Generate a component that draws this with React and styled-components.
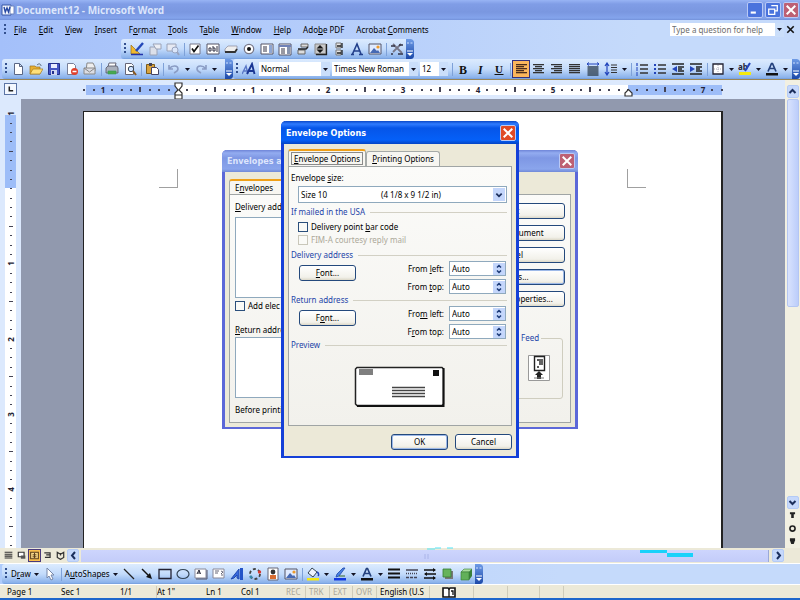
import React from 'react';
import styled, { createGlobalStyle, css } from 'styled-components';

const GlobalStyle = createGlobalStyle`
  * { box-sizing: border-box; }
  body { margin: 0; background: #1e66cc; }
  body, button, input, select, textarea {
    font-family: "Noto Sans", "Open Sans", sans-serif;
    font-size: 8px;
    line-height: 12px;
    color: #000;
  }
  button, input, select, textarea { margin: 0; padding: 0; border-radius: 0; }
  u { text-underline-offset: 1px; }
`;

const Window = styled.div`
  position: relative;
  display: flex;
  flex-direction: column;
  min-height: 100vh;
  overflow: hidden;
  border-bottom: 2px solid #1e66cc;
`;

/* ---------- title bar ---------- */

const TitleBar = styled.header`
  display: flex;
  align-items: center;
  height: 20px;
  padding: 0 1px 0 1px;
  background: linear-gradient(#98b4f4 0, #809de6 4px, #7a97e0 12px, #84a4ec 18px, #7391da 20px);
`;

const AppTitle = styled.h1`
  flex: 1;
  margin: 0 0 0 1px;
  font: bold 10px/20px "Noto Sans", sans-serif;
  color: #dce6fc;
`;

const WindowButton = styled.button`
  display: grid;
  place-items: center;
  width: 16px;
  height: 16px;
  margin-left: 2px;
  border: 1px solid #b9c9f6;
  border-radius: 2px;
  background: ${(p) => (p.$close ? (p.$active ? '#e04a26' : '#bd6074') : '#4a73dd')};
  svg { width: 12px; height: 12px; }
`;

/* ---------- menus and toolbars ---------- */

const Bars = styled.div`
  background: linear-gradient(90deg, #a4c0fa, #c5dafb 80%);
  border-bottom: 1px solid #9a8656;
`;

const MenuBar = styled.nav`
  display: flex;
  align-items: center;
  height: 19px;
  padding: 0 3px;
`;

const MenuItem = styled.button`
  margin: 0 6px;
  border: 0;
  background: none;
  white-space: nowrap;
`;

const HelpBox = styled.div`
  display: flex;
  align-items: center;
  height: 13px;
  margin-left: auto;
  background: #fff;
  input {
    width: 105px;
    height: 13px;
    padding-left: 2px;
    border: 0;
    background: #fff;
    &::placeholder { color: #6c6c6c; opacity: 1; }
  }
`;

const BarRow = styled.div`
  display: flex;
  padding-left: ${(p) => p.$inset || 2}px;
`;

const Toolbar = styled.div`
  display: flex;
  flex: ${(p) => (p.$grow ? 1 : 'none')};
  align-items: center;
  height: 20px;
  padding-left: 2px;
  overflow: hidden;
  border-radius: 3px;
  background: linear-gradient(#dcebfe, #c3dbfb 50%, #88b0ea 95%, #6d97d8);
`;

const Grip = styled.span`
  width: 2px;
  height: 12px;
  margin: 0 2px 0 1px;
  background: repeating-linear-gradient(#33508e 0 2px, transparent 2px 4px);
`;

const Separator = styled.span`
  width: 1px;
  height: 13px;
  margin: 0 1px 0 2px;
  background: #7ea1d8;
`;

const Spacer = styled.span`
  flex: ${(p) => (p.$width ? 'none' : 1)};
  width: ${(p) => p.$width || 0}px;
`;

const Cap = styled.button`
  display: grid;
  align-content: space-around;
  justify-items: center;
  flex: none;
  width: 8px;
  height: 20px;
  border: 0;
  border-radius: 0 3px 3px 0;
  background: linear-gradient(#6e9be6, #1b48a8);
  svg { width: 6px; height: 14px; }
`;

const ToolButton = styled.button`
  display: grid;
  place-items: center;
  flex: none;
  width: 18px;
  height: 18px;
  border: 1px solid transparent;
  background: none;
  ${(p) => p.$on && css`
    border-color: #33307c;
    background: #fbb65c;
  `}
  svg { width: 14px; height: 14px; }
`;

const DropButton = styled.button`
  display: grid;
  place-items: center;
  flex: none;
  width: 9px;
  height: 14px;
  border: 0;
  background: ${(p) => (p.$box ? '#cadefa' : 'none')};
  svg { width: 5px; height: 3px; }
`;

const WordButton = styled.button`
  display: flex;
  align-items: center;
  gap: 3px;
  flex: none;
  padding: 0 2px;
  border: 0;
  background: none;
  svg { width: 5px; height: 3px; }
`;

const Combo = styled.label`
  display: flex;
  align-items: center;
  flex: none;
  width: ${(p) => p.$width}px;
  height: 14px;
  margin: 0 1px;
  background: linear-gradient(90deg, #fff calc(100% - 9px), #cadefa 0);
  select {
    flex: 1;
    min-width: 0;
    height: 14px;
    padding-left: 2px;
    border: 0;
    appearance: none;
    background: none;
  }
  svg { width: 5px; height: 3px; margin-right: 2px; }
`;

/* ---------- workspace ---------- */

const Workspace = styled.main`
  display: grid;
  flex: 1;
  grid-template-columns: 21px minmax(0, 1fr) 15px;
  grid-template-rows: 19px minmax(0, 1fr);
  min-height: 0;
  background: #dce9fd;
`;

const Corner = styled.button`
  display: grid;
  place-items: center;
  width: 13px;
  height: 12px;
  margin: 3px 0 0 4px;
  border: 1px solid #5b74a5;
  background: #f4f8ff;
  svg { width: 6px; height: 6px; }
`;

const TopRuler = styled.div`
  display: flex;
  justify-content: center;
  align-items: center;
  overflow: hidden;
`;

const TopScale = styled.div`
  position: relative;
  display: flex;
  flex: none;
  width: 647px;
  height: 10px;
  background: linear-gradient(90deg, transparent 6px, #9dbdf8 6px 98px, #fff 98px 548px, #9dbdf8 548px 642px, transparent 642px);
`;

const SideRuler = styled.div`
  display: flex;
  flex-direction: column;
  height: 0;
  min-height: 100%;
  padding: 10px 5px 0 5px;
  overflow: hidden;
`;

const SideScale = styled.div`
  display: flex;
  flex: none;
  flex-direction: column;
  height: 441px;
  background: linear-gradient(#dce9fd 6px, #9dbdf8 6px 79px, #fff 79px);
`;

const Mark = styled.span`
  display: grid;
  place-items: center;
  flex: 1 1 0;
  min-width: 0;
  min-height: 0;
  font: bold 8px/9px "Noto Sans", sans-serif;
  color: #223;
  &::before {
    content: '';
    display: ${(p) => (p.$kind === 'number' ? 'none' : 'block')};
    width: ${(p) => (p.$kind === 'half' && p.$side ? 4 : 2)}px;
    height: ${(p) => (p.$kind === 'half' && !p.$side ? 5 : p.$side ? 1 : 2)}px;
    background: #445;
  }
  span { transform: ${(p) => (p.$side ? 'rotate(-90deg)' : 'none')}; }
`;

const IndentMarker = styled.svg`
  position: absolute;
  left: ${(p) => p.$at}px;
  top: -3px;
  width: 9px;
  height: 18px;
`;

const Desk = styled.div`
  display: flex;
  justify-content: center;
  overflow: hidden;
  padding-top: 12px;
  background: #9199ae;
`;

const Page = styled.article`
  display: flex;
  justify-content: space-between;
  flex: none;
  width: 640px;
  padding: 57px 75px;
  border: solid #222;
  border-width: 1px 2px 0 1px;
  background: #fff;
`;

const CropMark = styled.span`
  width: 19px;
  height: 19px;
  border: solid #a0a0a0;
  border-width: ${(p) => (p.$right ? '0 0 1px 1px' : '0 1px 1px 0')};
`;

const ScrollColumn = styled.div`
  display: flex;
  flex-direction: column;
  grid-row: 1 / 3;
  grid-column: 3;
  align-items: center;
  padding: 5px 0 0;
  background: #f2f0e2;
`;

const ScrollThumb = styled.div`
  width: 12px;
  height: 208px;
  margin-top: 1px;
  border: 1px solid #b4c6f2;
  border-radius: 2px;
  background: linear-gradient(90deg, #d8e2fd, #bccdfa);
`;

const ScrollButton = styled.button`
  display: grid;
  place-items: center;
  flex: none;
  width: 12px;
  height: 13px;
  border: ${(p) => (p.$flat ? 0 : '1px solid #b4cbf6')};
  border-radius: 2px;
  background: ${(p) => (p.$flat ? 'none' : '#c6d8fb')};
  svg { width: 9px; height: 9px; }
`;

const ScrollRow = styled.div`
  display: flex;
  align-items: center;
  height: 15px;
  padding: 0 16px 0 2px;
  background: #ece9d8;
`;

const ViewButton = styled.button`
  display: grid;
  place-items: center;
  width: 13px;
  height: 13px;
  border: ${(p) => (p.$on ? '1px solid #4a3a7c' : 0)};
  background: ${(p) => (p.$on ? '#fbbf4e' : 'none')};
  svg { width: 9px; height: 9px; }
`;

const ScrollTrack = styled.div`
  display: flex;
  justify-content: flex-end;
  flex: 1;
  height: 12px;
  margin: 0 3px 0 2px;
  border-right: 1px solid #9aa9d8;
  background: linear-gradient(#cdd5fd, #c3ccf9);
  svg { width: 346px; height: 12px; overflow: visible; }
`;

const StatusBar = styled.footer`
  display: flex;
  align-items: center;
  height: 14px;
  border-top: 1px solid #fff;
  background: #ece9d8;
`;

const StatusCell = styled.span`
  display: flex;
  align-items: center;
  flex: none;
  width: ${(p) => p.$width}px;
  height: 12px;
  padding-left: ${(p) => (p.$box ? 3 : 0)}px;
  overflow: hidden;
  white-space: nowrap;
  border-right: ${(p) => (p.$box ? '1px solid #cfccba' : 0)};
  color: ${(p) => (p.$dim ? '#aaa798' : '#000')};
`;

/* ---------- dialogs ---------- */

const DialogFrame = styled.section`
  position: absolute;
  top: ${(p) => p.$top}px;
  left: 50%;
  display: flex;
  flex-direction: column;
  width: ${(p) => p.$width}px;
  margin-left: ${(p) => -p.$width / 2}px;
  border: solid ${(p) => (p.$active ? '#1440d8' : '#5c68d8')};
  border-width: 0 3px 2px;
  border-radius: 5px 5px 0 0;
  background: #ece9d8;
`;

const DialogTitle = styled.header`
  display: flex;
  align-items: center;
  justify-content: space-between;
  height: ${(p) => (p.$active ? 23 : 22)}px;
  margin: 0 -3px;
  padding: 0 3px 0 5px;
  border-radius: 5px 5px 0 0;
  background: ${(p) => (p.$active
    ? 'linear-gradient(#0a48c8, #2f7bff 3px, #0655e8 7px, #0560f8 19px, #0444c4)'
    : 'linear-gradient(#6f85d8, #93acf0 3px, #7e97e4 8px, #8aa5ec 19px, #7189d8)')};
  h2 {
    margin: 0;
    font: bold 9px/20px "DejaVu Sans Condensed", "DejaVu Sans", sans-serif;
    color: ${(p) => (p.$active ? '#fff' : '#dde5fc')};
    white-space: nowrap;
  }
`;

const Tabs = styled.div`
  display: flex;
  align-items: flex-end;
  height: ${(p) => p.$height}px;
  margin: ${(p) => p.$top}px 4px 0;
`;

const Tab = styled.button`
  height: ${(p) => (p.$on ? '100%' : '15px')};
  padding: ${(p) => (p.$on ? '0 2px' : '0 5px')};
  border: 1px solid #a5aaa8;
  border-top: ${(p) => (p.$on ? '2px solid #f0a018' : '1px solid #a5aaa8')};
  border-bottom: 0;
  border-radius: 3px 3px 0 0;
  background: #f7f6f1;
  white-space: nowrap;
  text-align: left;
  span {
    display: block;
    padding: ${(p) => (p.$focus ? '0 2px' : '0 16px 0 2px')};
    border: 1px solid ${(p) => (p.$focus ? '#8a8a8a' : 'transparent')};
    line-height: 11px;
  }
`;

const Panel = styled.div`
  display: flex;
  flex-direction: ${(p) => (p.$row ? 'row' : 'column')};
  justify-content: space-between;
  margin: 0 4px;
  padding: ${(p) => p.$pad};
  border: 1px solid #a0a5a5;
  background: linear-gradient(#fbfbf9, #f2f1ec);
`;

const Column = styled.div`
  display: flex;
  flex-direction: column;
  width: ${(p) => p.$width}px;
`;

const FieldLabel = styled.label`
  height: 12px;
  margin-top: ${(p) => p.$top || 0}px;
  white-space: nowrap;
`;

const AddressBox = styled.textarea`
  height: ${(p) => p.$height}px;
  margin-top: ${(p) => p.$top}px;
  border: 1px solid #8fa9bd;
  background: #fff;
  resize: none;
`;

const CheckRow = styled.label`
  display: flex;
  align-items: center;
  gap: 3px;
  height: 12px;
  margin-top: ${(p) => p.$top}px;
  margin-left: ${(p) => p.$left || 0}px;
  white-space: nowrap;
  color: ${(p) => (p.$dim ? '#aca899' : '#000')};
  input {
    width: 10px;
    height: 10px;
    appearance: none;
    border: 1px solid ${(p) => (p.$dim ? '#c9c7ba' : '#2b4f7c')};
    background: #fafaf7;
  }
`;

const PushButton = styled.button`
  width: ${(p) => p.$width}px;
  height: 16px;
  border: 1px solid #24497c;
  border-radius: 3px;
  background: linear-gradient(#fff, #f2f1ea 80%, #dcd8c8);
  box-shadow: ${(p) => (p.$default ? 'inset 0 0 0 1px #9db9e8' : 'none')};
  white-space: nowrap;
`;

const ButtonStack = styled(Column)`
  gap: 6px;
  margin-top: 2px;
`;

const FeedGroup = styled.fieldset`
  display: flex;
  justify-content: flex-end;
  align-items: flex-start;
  width: 54px;
  height: 66px;
  margin: 20px 2px 0 auto;
  padding: 12px 12px 0 0;
  border: 1px solid #cfcdbf;
  border-radius: 3px;
  legend { margin-left: 9px; padding: 0 2px; line-height: 10px; color: #1d44a8; }
  svg { width: 22px; height: 26px; }
`;

const SizeSelect = styled.div`
  display: flex;
  align-items: center;
  height: 17px;
  margin: 2px 0 0 7px;
  border: 1px solid #8fa9bd;
  background: #fff;
  select {
    flex: 1;
    min-width: 0;
    height: 15px;
    padding-left: 2px;
    border: 0;
    appearance: none;
    background: none;
  }
  span {
    display: grid;
    place-items: center;
    width: 12px;
    height: 13px;
    margin-right: 1px;
    background: #c4d6fb;
  }
  svg { width: 8px; height: 8px; }
`;

const GroupTitle = styled.h3`
  display: flex;
  align-items: center;
  gap: 5px;
  margin: ${(p) => p.$top}px 0 0;
  font-size: 8px;
  font-weight: normal;
  line-height: 10px;
  color: #1d44a8;
  white-space: nowrap;
  &::after { content: ''; flex: 1; height: 1px; background: #d2d0c4; }
`;

const AddressGroup = styled.div`
  display: flex;
  justify-content: space-between;
  margin: 1px 1px 0 8px;
  > button { margin-top: 4px; }
`;

const Spins = styled.div`
  display: grid;
  grid-template-columns: auto 57px;
  gap: 3px 5px;
  align-items: center;
  justify-items: end;
  label { white-space: nowrap; }
`;

const Spin = styled.span`
  display: flex;
  align-items: center;
  width: 57px;
  height: 15px;
  border: 1px solid #8fa9bd;
  background: #fff;
  input { flex: 1; min-width: 0; width: 0; height: 13px; padding-left: 2px; border: 0; background: none; }
`;

const SpinButtons = styled.span`
  display: flex;
  flex-direction: column;
  width: 12px;
  button {
    display: grid;
    place-items: center;
    height: 6px;
    border: 0;
    background: #c4d6fb;
  }
  svg { width: 6px; height: 4px; }
`;

const Preview = styled.svg`
  align-self: center;
  width: 91px;
  height: 41px;
  margin-top: 16px;
`;

const DialogFooter = styled.footer`
  display: flex;
  justify-content: flex-end;
  gap: 7px;
  padding: 8px 4px 6px;
`;

const DialogFoot = styled.div`
  height: 4px;
`;

const DrawBars = styled.div`
  display: flex;
  align-items: center;
  height: 21px;
  padding-left: 2px;
  border-top: 1px solid #fff;
  background: linear-gradient(90deg, #aecbfb, #c5dafb 70%);
`;

/* ---------- icons ---------- */

const Down = () => <svg viewBox="0 0 5 3"><path d="M0 0h5L2.5 3z" fill="#112" /></svg>;
const Chevron = ({ d }) => (
  <svg viewBox="0 0 9 9"><path d={d} fill="none" stroke="#1c2f5c" strokeWidth="2" /></svg>
);
const CHEVRONS = { up: 'M1.5 6 4.5 3 7.5 6', down: 'M1.5 3 4.5 6 7.5 3', left: 'M6 1 3 4.5 6 8', right: 'M3 1 6 4.5 3 8' };

const lines = (rows, color = '#333') => rows.map(([x, w], i) => (
  <rect key={i} x={x} y={2 + i * 2} width={w} height="1.3" fill={color} />
));

const ART = {
  word: <><path d="M1 2h9v10H1z" fill="#f4f7ff" stroke="#3757a5" /><path d="M9 3h4v8H9z" fill="#fff" stroke="#6f86c0" /><path d="m3 4 1.3 5L6 5l1.5 4L9 4" fill="none" stroke="#2647a0" strokeWidth="1.4" /></>,
  page: <path d="M3.5 1.5h5l3 3v8h-8zM8.500 1.500v3h3" fill="#fff" stroke="#5a6785" />,
  open: <><path d="M1 4h5l1 1h4v7H1z" fill="#e8b030" stroke="#9b7420" strokeWidth=".7" /><path d="m1 12 3-5h10l-3 5z" fill="#ffe07a" stroke="#a57c20" strokeWidth=".7" /><path d="M8 3c2-2 4-1 4 1" fill="none" stroke="#567" /></>,
  save: <><path d="M1.500 1.500h11v11h-11z" fill="#4456c4" stroke="#23308c" /><path d="M4 2h6v4H4z" fill="#e8edff" /><path d="M4 8h6v5H4z" fill="#cfd6f0" /><path d="M5 9h2v3H5z" fill="#23308c" /></>,
  perm: <><path d="M2.500 1.500h6l2 2v9h-8z" fill="#fff" stroke="#777f99" /><circle cx="9.500" cy="9.500" r="3.500" fill="#e0402c" /><path d="M7.500 9.500h4" stroke="#fff" strokeWidth="1.500" /></>,
  mail: <><path d="M4 1h6l2 4v4H3z" fill="#eee" stroke="#888" /><path d="M1 6h11v6H1z" fill="#dcdde4" stroke="#888" /><path d="m1 6 5.500 4L12 6" fill="none" stroke="#888" /></>,
  print: <><path d="M4 1h7l-1 4H3z" fill="#fff" stroke="#667" /><path d="M1 6l2-2h9l1 2v5H1z" fill="#a9b0bc" stroke="#556" strokeWidth=".8" /><path d="M3 9h8v3H3z" fill="#4aa84e" stroke="#395" strokeWidth=".6" /></>,
  lens: <><path d="M2.500 1.500h6l2 2v9h-8z" fill="#fff" stroke="#667" /><circle cx="8" cy="7" r="2.700" fill="#cfe2ff" stroke="#345" /><path d="m10 9 3 4" stroke="#8a5a20" strokeWidth="2" /></>,
  paste: <><path d="M1.500 2.500h8v9h-8z" fill="#d9a33e" stroke="#7c5c1c" /><path d="M4 1h3v3H4z" fill="#445" /><path d="M6.500 5.500h5l2 2v5h-7z" fill="#fff" stroke="#446" /></>,
  undo: <path d="M2 3v4h4M2.500 6.500C5 3 11 3 11 7c0 2-2 3-4 4" fill="none" stroke="#8a9cc4" strokeWidth="1.600" />,
  redo: <path d="M12 3v4H8M11.500 6.500C9 3 3 3 3 7c0 2 2 3 4 4" fill="none" stroke="#8a9cc4" strokeWidth="1.600" />,
  styles: <><path d="M0 12 4 4l2 8M2 9h4" fill="none" stroke="#5a78c8" strokeWidth="1.400" /><path d="m5 12 5-10 2.500 10M7 9h5" fill="none" stroke="#1a3694" strokeWidth="1.900" /></>,
  bold: <text x="3" y="11.500" fontFamily="Liberation Serif, serif" fontWeight="bold" fontSize="12" fill="#111">B</text>,
  italic: <text x="4" y="11.500" fontFamily="Liberation Serif, serif" fontWeight="bold" fontStyle="italic" fontSize="12" fill="#111">I</text>,
  underline: <><text x="3" y="10.500" fontFamily="Liberation Serif, serif" fontWeight="bold" fontSize="11" fill="#111">U</text><path d="M2.500 12.500h9" stroke="#111" /></>,
  left: lines([[2, 11], [2, 8], [2, 11], [2, 8], [2, 11]], '#4a2c1c'),
  center: lines([[1, 11], [3, 7], [1, 11], [3, 7], [1, 11]]),
  right: lines([[1, 11], [4, 8], [1, 11], [4, 8], [1, 11]]),
  justify: lines([[1, 11], [1, 11], [1, 11], [1, 11], [1, 11]]),
  dist: <><path d="M1 2h12M3 .5 1 2l2 1.500M11 .5 13 2l-2 1.500" fill="none" stroke="#24b" /><path d="M1.500 5h11M1.500 7h11M1.500 9h11M1.500 11h11M1.500 13h11" stroke="#345" strokeWidth="1.300" /></>,
  spacing: <><path d="M3 1v12M1 4l2-3 2 3M1 10l2 3 2-3" fill="none" stroke="#24b" strokeWidth="1.200" /><path d="M7 3h6M7 5.500h6M7 8h6M7 10.500h6" stroke="#333" strokeWidth="1.200" /></>,
  numbers: <><path d="M2 1v3M1 6h2M1 8h2M1 11h2M1 13h2" stroke="#24b" strokeWidth="1.200" /><path d="M5 3h8M5 7h8M5 11h8" stroke="#333" strokeWidth="1.600" /></>,
  bullets: <><path d="M1 3h2M1 7h2M1 11h2" stroke="#24b" strokeWidth="2" /><path d="M5 3h8M5 7h8M5 11h8" stroke="#333" strokeWidth="1.600" /></>,
  outdent: <><path d="M1 2h12M7 5h6M7 7h4M7 9h6M1 12h12" stroke="#222" strokeWidth="1.600" /><path d="M6 4v6L1 7z" fill="#24b" /></>,
  indent: <><path d="M1 2h12M7 5h6M7 7h4M7 9h6M1 12h12" stroke="#222" strokeWidth="1.600" /><path d="M1 4v6l5-3z" fill="#24b" /></>,
  border: <><path d="M2 2h10v10H2z" fill="#fff" stroke="#223" strokeWidth="1.300" /><path d="M7 3v8M3 7h8" stroke="#aab" strokeDasharray="1" /></>,
  highlight: <><path d="M1 10h12v3H1z" fill="#f4ea10" /><text x="0" y="8" fontFamily="Noto Sans, sans-serif" fontSize="8" fontWeight="bold" fill="#223">ab</text><path d="m12 1-5 8" stroke="#24b" strokeWidth="2" /></>,
  fontColor: <><path d="M3 9.500 6.500 1.500 7.500 1.500 11 9.500M4.500 6.500h5" fill="none" stroke="#23407c" strokeWidth="1.700" /><path d="M1 11h12v2.500H1z" fill="#111" /></>,
  design: <><path d="M1 12V3l9 9z" fill="#f0b92c" stroke="#9a701a" strokeWidth=".7" /><path d="m13 1-7 8" stroke="#2448b8" strokeWidth="2.400" /><path d="M1 12.500h12" stroke="#23a" strokeWidth="1.500" /></>,
  props: <><path d="M2 5h7v8H2z" fill="#dce0ea" stroke="#9aa2b6" /><path d="M5 2h8v5H8z" fill="#eceef4" stroke="#9aa2b6" /></>,
  code: <><path d="M1 2h9v7H1z" fill="#e6e9f2" stroke="#9aa2b6" /><circle cx="9" cy="8" r="3" fill="#dbe6fa" stroke="#98a4c0" /><path d="m11 10 2 3" stroke="#98a4c0" strokeWidth="2" /></>,
  check: <><path d="M2 2h10v10H2z" fill="#fff" stroke="#778" /><path d="m4 6.500 2 3 4.500-6" fill="none" stroke="#111" strokeWidth="1.700" /></>,
  textbox: <><path d="M1 2h12v10H1z" fill="#fff" stroke="#556" /><path d="M3 9V6h2v3zM7 4v5h2V6H7M11 4v6" fill="none" stroke="#334" /></>,
  button: <><path d="M1 7 4 4h9v4l-2 2H1z" fill="#eee" stroke="#889" strokeWidth=".7" /><path d="M1 10h10l2-3" fill="none" stroke="#333" strokeWidth="1.800" /></>,
  radio: <><circle cx="7" cy="7" r="4.700" fill="#fff" stroke="#778" strokeWidth="1.300" /><circle cx="7" cy="7" r="2" fill="#111" /></>,
  list: <><path d="M1 2h12v10H1z" fill="#fff" stroke="#556" /><path d="M3 5h4M3 7h4M3 9h4" stroke="#334" /><path d="M9 3h3v8H9z" fill="#8fa6d2" /></>,
  combo: <><path d="M1 2h12v11H1z" fill="#fff" stroke="#556" /><path d="M1 3h12v2H1z" fill="#6f82b8" /><path d="M3 7h4M3 9h4M3 11h4" stroke="#334" /><path d="M9 5h3v7H9z" fill="#8794ae" /></>,
  toggle: <><path d="M5 2h7v3H5zM2 8h7v4H2z" fill="#ddd" stroke="#666" /><path d="M2 7h8l2-2" fill="none" stroke="#222" strokeWidth="1.500" /></>,
  spinner: <><path d="M1 2h11v10H1z" fill="#c8c8c8" stroke="#888" /><path d="M2.500 6.500 6 3l3.500 3.500zM2.500 7.500 6 11l3.500-3.500z" fill="#151515" /><path d="M12.500 2v10.500H2" fill="none" stroke="#222" strokeWidth="1.300" /></>,
  scroll: <><path d="M4 1h5v5H4zM4 8h5v5H4z" fill="#e6e6e6" stroke="#777" /><path d="M5 4h4M5 11h4M10 1v5M10 8v5" stroke="#222" strokeWidth="1.300" /></>,
  label: <path d="M2.500 12 7 2l4 10M3.500 9H10M1 12.500h3M9 12.500h4" fill="none" stroke="#23408c" strokeWidth="1.600" />,
  image: <><path d="M1 2h12v10H1z" fill="#dfeaff" stroke="#556" /><path d="m2 11 4-5 3 3 1-1 2 3z" fill="#4669b4" /><circle cx="10" cy="5" r="1.600" fill="#ee9a2a" /></>,
  tools: <><path d="m3 2 9 9M11 2 3 10" stroke="#778" strokeWidth="1.800" /><path d="M1 4h4M9 3h4M8 12h5M1 12h2" stroke="#334" strokeWidth="1.300" /></>,
  cursor: <path d="m4 1 7 7H8l2 4-2 1-2-4-2 2z" fill="#fff" stroke="#7787a8" />,
  line: <path d="m2 2 10 10" stroke="#222" strokeWidth="1.300" />,
  arrow: <><path d="m2 2 7 7" stroke="#111" strokeWidth="1.400" /><path d="m12 12-6-2 4-4z" fill="#111" /></>,
  rect: <path d="M1 2.500h12v9H1z" fill="none" stroke="#223" strokeWidth="1.300" />,
  oval: <ellipse cx="7" cy="7" rx="6" ry="4.500" fill="none" stroke="#345" strokeWidth="1.200" />,
  text: <><path d="M1 2h11v9H1z" fill="#fff" stroke="#889" /><path d="M3 7 5 3l1.500 4M4 6h2" fill="none" stroke="#223" /><path d="M2 12h11V3" fill="none" stroke="#556" /></>,
  vtext: <><path d="M1 2h11v9H1z" fill="#fff" stroke="#889" /><path d="m9 4 2 1-2 2M9 8h2M3 4h4M3 6h3" fill="none" stroke="#667" /></>,
  wordart: <><path d="M1 12 9 2v10l-2-1V8L4 11z" fill="#3869dc" stroke="#204ab0" /><path d="M10 1h3v12h-3z" fill="#2454c8" /></>,
  diagram: <><circle cx="7" cy="7" r="5" fill="none" stroke="#444" strokeWidth="1.800" strokeDasharray="3 2.200" /><circle cx="11.500" cy="5" r="1.700" fill="#d83a30" /><circle cx="3" cy="10" r="1.500" fill="#38a" /></>,
  clip: <><path d="M2 1h10v12H2z" fill="#fff" stroke="#667" /><circle cx="7" cy="5" r="2.400" fill="#333" /><path d="M4 8h6v4H4z" fill="#d86c30" /></>,
  fill: <><path d="m6 1 5 4-4 5-5-4z" fill="#eef3ff" stroke="#345" /><path d="M11 5c2 1 2 3 1 4" fill="none" stroke="#24b" strokeWidth="1.500" /><path d="M1 11h12v2.500H1z" fill="#f4ea10" /></>,
  brush: <><path d="m12 1-6 8-3 1 1-3 6-6z" fill="#4a82e0" stroke="#1d48ac" strokeWidth=".8" /><path d="M6 9h6" stroke="#386a28" /><path d="M1 11h12v2.500H1z" fill="#1238e0" /></>,
  weights: <path d="M1 2.500h12M1 6.500h12M1 10.500h12" stroke="#111" strokeWidth="2" />,
  dashes: <><path d="M1 3h12" stroke="#445" strokeWidth="1.500" /><path d="M1 6.500h12" stroke="#445" strokeWidth="1.500" strokeDasharray="1 1" /><path d="M1 10.500h12" stroke="#445" strokeWidth="1.500" strokeDasharray="3 1" /></>,
  arrows: <><path d="M1 3h11M2 7h11M1 11h11" stroke="#111" strokeWidth="1.300" /><path d="m10 1 3 2-3 2zM4 5 1 7l3 2zM10 9l3 2-3 2z" fill="#111" /></>,
  shadow: <><path d="M4 4h8v8H4z" fill="#777" /><path d="M2 2h8v8H2z" fill="#66b35c" stroke="#357c34" strokeWidth=".8" /></>,
  cube: <><path d="m2 5 3-3h8l-3 3z" fill="#a8dc9c" stroke="#357c34" strokeWidth=".6" /><path d="M10 5 13 2v7l-3 4z" fill="#38803a" /><path d="M2 5h8v8H2z" fill="#62b05a" stroke="#357c34" strokeWidth=".6" /></>,
  normalView: <path d="M1 2h12M1 5h12M1 8h12M1 11h12" stroke="#333" strokeWidth="1.700" />,
  webView: <><path d="M2 2h9v7H2z" fill="#fff" stroke="#333" strokeWidth="1.800" /><path d="M6 7h7v5H6z" fill="#555" /></>,
  printView: <><path d="M1 2h12v10H1z" fill="#fbd98a" stroke="#5a3d1c" strokeWidth="1.600" /><path d="M4 6h6M4 9h6M7 3v8" stroke="#5a3d1c" strokeWidth="1.500" /></>,
  outlineView: <path d="M2 3h9v7H3M5 6h5" fill="none" stroke="#333" strokeWidth="1.900" />,
  readView: <path d="M2 2v8l5 3 5-3V2L9 4H5zM7 4v3" fill="none" stroke="#333" strokeWidth="1.900" />,
  tab: <path d="M3 1v10h9" fill="none" stroke="#222" strokeWidth="3.500" />,
  min: <path d="M2 10h6" stroke="#fff" strokeWidth="2.500" />,
  restore: <path d="M5 2h7v6H9M2 6h7v6H2z" fill="none" stroke="#fff" strokeWidth="1.500" />,
  close: <path d="m2 2 10 10M12 2 2 12" stroke="#fff" strokeWidth="2.300" />,
  darkClose: <path d="m2 2 10 10M12 2 2 12" stroke="#111" strokeWidth="2.500" />,
  dotUp: <path d="M3 2h8v3h-2v6H5V5H3z" fill="#222" />,
  dotDown: <path d="M3 2h8v3L9 11H5L3 5z" fill="#222" />,
  browse: <circle cx="7" cy="7" r="4" fill="none" stroke="#222" strokeWidth="2.500" />,
  book: <><path d="M1 3h5l1 1 1-1h5v9H1z" fill="#fff" stroke="#111" strokeWidth="1.600" /><path d="M7 4v8M9 6h2v4" fill="none" stroke="#111" strokeWidth="1.300" /></>,
};

const Icon = ({ name, size }) => (
  <svg viewBox="0 0 14 14" width={size || 14} height={size || 14} aria-hidden="true">{ART[name]}</svg>
);

/* "|" separator, "v" drop arrow, anything else is an icon name */
const Tools = ({ items, active }) => items.map((name, i) => {
  if (name === '|') return <Separator key={i} />;
  if (name === 'v') return <DropButton key={i} aria-label="More choices"><Down /></DropButton>;
  return <ToolButton key={i} $on={name === active} aria-label={name}><Icon name={name} /></ToolButton>;
});

const BarCap = () => (
  <Cap aria-label="Toolbar options">
    <svg viewBox="0 0 6 14"><path d="M0 1h2M3.500 1h2" stroke="#cfe0ff" strokeWidth="1" /><path d="M0 9h6" stroke="#fff" strokeWidth="1.200" /><path d="M0 11h6l-3 3z" fill="#fff" /></svg>
  </Cap>
);

const Drop = ({ width, label, options }) => (
  <Combo $width={width}>
    <select aria-label={label}>{options.map((o) => <option key={o}>{o}</option>)}</select>
    <Down />
  </Combo>
);

const MENUS = [['', 'F', 'ile'], ['', 'E', 'dit'], ['', 'V', 'iew'], ['', 'I', 'nsert'], ['F', 'o', 'rmat'], ['', 'T', 'ools'],
  ['T', 'a', 'ble'], ['', 'W', 'indow'], ['', 'H', 'elp'], ['Ado', 'b', 'e PDF'], ['Acrobat ', 'C', 'omments']];

const Marks = ({ from, to, side }) => {
  const out = [];
  for (let i = from; i <= to; i += 1) {
    const whole = i % 8 === 0 && i !== 0 && !(i === 48 && !side);
    const kind = whole ? 'number' : i % 4 === 0 && i !== 0 && i !== 48 ? 'half' : 'dot';
    out.push(<Mark key={i} $kind={kind} $side={side}>{whole && <span>{Math.abs(i / 8)}</span>}</Mark>);
  }
  return out;
};

const SpinField = ({ id, pre, k, post }) => (
  <>
    <label htmlFor={id}>{pre}<u>{k}</u>{post}</label>
    <Spin>
      <input id={id} defaultValue="Auto" />
      <SpinButtons>
        <button aria-label="Increase"><svg viewBox="0 0 6 4"><path d="M1 3.500 3 1.500l2 2" fill="none" stroke="#1c3a78" strokeWidth="1.500" /></svg></button>
        <button aria-label="Decrease"><svg viewBox="0 0 6 4"><path d="m1 .5 2 2 2-2" fill="none" stroke="#1c3a78" strokeWidth="1.500" /></svg></button>
      </SpinButtons>
    </Spin>
  </>
);

const EnvelopesDialog = () => (
  <DialogFrame $top={150} $width={356} aria-label="Envelopes and Labels">
    <DialogTitle>
      <h2>Envelopes and Labels</h2>
      <WindowButton $close aria-label="Close"><Icon name="close" /></WindowButton>
    </DialogTitle>
    <Tabs $top={7} $height={15}>
      <Tab $on><span>E<u>n</u>velopes</span></Tab>
    </Tabs>
    <Panel $row $pad="6px 5px 6px 5px">
      <Column $width={215}>
        <FieldLabel htmlFor="delivery"><u>D</u>elivery address:</FieldLabel>
        <AddressBox id="delivery" $height={81} $top={4} />
        <CheckRow $top={2}><input type="checkbox" />Add elec</CheckRow>
        <FieldLabel htmlFor="return" $top={12}><u>R</u>eturn address:</FieldLabel>
        <AddressBox id="return" $height={61} $top={1} />
        <FieldLabel as="span" $top={6}>Before printing, insert envelope.</FieldLabel>
      </Column>
      <ButtonStack $width={109}>
        <PushButton $width={109}>Print</PushButton>
        <PushButton $width={109}>Add to Document</PushButton>
        <PushButton $width={109}>Cancel</PushButton>
        <PushButton $width={109} $default>Options...</PushButton>
        <PushButton $width={109}>E-postage Properties...</PushButton>
        <FeedGroup>
          <legend>Feed</legend>
          <svg viewBox="0 0 22 26">
            <path d="M.5.500h21v25H.5z" fill="#fff" stroke="#999" />
            <path d="M6.500 1.500h10v14h-10z" fill="#fff" stroke="#222" strokeWidth="1.400" />
            <path d="M9 5h2M9 12h2M12 4v6M14 4v6" stroke="#222" strokeWidth="1.400" />
            <path d="m11 16 4 4H7zM9 20h4v4H9z" fill="#222" />
            <path d="M6 23h10" stroke="#777" />
          </svg>
        </FeedGroup>
      </ButtonStack>
    </Panel>
    <DialogFoot />
  </DialogFrame>
);

const SIZE_GAP = '\u00a0'.repeat(26);

const OptionsDialog = () => (
  <DialogFrame $active $top={121} $width={238} aria-label="Envelope Options">
    <DialogTitle $active>
      <h2>Envelope Options</h2>
      <WindowButton $close $active aria-label="Close"><Icon name="close" /></WindowButton>
    </DialogTitle>
    <Tabs $top={5} $height={17}>
      <Tab $on $focus><span><u>E</u>nvelope Options</span></Tab>
      <Tab><u>P</u>rinting Options</Tab>
    </Tabs>
    <Panel $pad="5px 4px 18px 2px">
      <FieldLabel htmlFor="size">Envelope <u>s</u>ize:</FieldLabel>
      <SizeSelect>
        <select id="size"><option>{`Size 10${SIZE_GAP}(4 1/8 x 9 1/2 in)`}</option></select>
        <span><Chevron d={CHEVRONS.down} /></span>
      </SizeSelect>
      <GroupTitle $top={4}>If mailed in the USA</GroupTitle>
      <CheckRow $top={4} $left={7}><input type="checkbox" /><span>Delivery point <u>b</u>ar code</span></CheckRow>
      <CheckRow $top={1} $left={7} $dim><input type="checkbox" disabled />FIM-A courtesy reply mail</CheckRow>
      <GroupTitle $top={4}>Delivery address</GroupTitle>
      <AddressGroup>
        <PushButton $width={57}><u>F</u>ont...</PushButton>
        <Spins>
          <SpinField id="dl" pre="From " k="l" post="eft:" />
          <SpinField id="dt" pre="From " k="t" post="op:" />
        </Spins>
      </AddressGroup>
      <GroupTitle $top={1}>Return address</GroupTitle>
      <AddressGroup>
        <PushButton $width={57}>F<u>o</u>nt...</PushButton>
        <Spins>
          <SpinField id="rl" pre="Fro" k="m" post=" left:" />
          <SpinField id="rt" pre="F" k="r" post="om top:" />
        </Spins>
      </AddressGroup>
      <GroupTitle $top={1}>Preview</GroupTitle>
      <Preview viewBox="0 0 91 41">
        <path d="M3 1.500h85l1.500 1.500v35L88 39.500H3L1.500 38V3z" fill="#fff" stroke="#222" strokeWidth="1.500" />
        <path d="M3 40h86.500V2" fill="none" stroke="#111" strokeWidth="2" />
        <path d="M5 4h14M5 6h14M5 8h14" stroke="#555" strokeWidth="1.300" />
        <path d="M79 4h6v6h-6z" fill="#111" />
        <path d="M38 21.500h33M38 24.500h33M38 27.500h33M38 30.500h33" stroke="#444" strokeWidth="1.500" />
      </Preview>
    </Panel>
    <DialogFooter>
      <PushButton $width={57} $default>OK</PushButton>
      <PushButton $width={57}>Cancel</PushButton>
    </DialogFooter>
  </DialogFrame>
);

const STATUS = [
  ['Page 1', 54], ['Sec 1', 59], ['1/1', 33], ['', 2, 1], ['At 1"', 49], ['Ln 1', 35], ['Col 1', 42], ['REC', 23, 1, 1],
  ['TRK', 24, 1, 1], ['EXT', 23, 1, 1], ['OVR', 24, 1, 1], ['English (U.S', 53, 1],
];

export default function App() {
  return (
    <>
      <GlobalStyle />
      <Window>
        <TitleBar>
          <Icon name="word" />
          <AppTitle>Document12 - Microsoft Word</AppTitle>
          <WindowButton aria-label="Minimize"><Icon name="min" /></WindowButton>
          <WindowButton aria-label="Restore"><Icon name="restore" /></WindowButton>
          <WindowButton $close aria-label="Close"><Icon name="close" /></WindowButton>
        </TitleBar>

        <Bars>
          <MenuBar>
            <Grip />
            {MENUS.map(([a, k, b]) => <MenuItem key={b}>{a}<u>{k}</u>{b}</MenuItem>)}
            <HelpBox>
              <input aria-label="Help" placeholder="Type a question for help" />
              <DropButton $box aria-label="Recent questions"><Down /></DropButton>
            </HelpBox>
            <ViewButton aria-label="Close document"><Icon name="darkClose" /></ViewButton>
          </MenuBar>
          <BarRow $inset={121}>
            <Toolbar>
              <Grip />
              <Tools items={['design', 'props', 'code', '|', 'check', 'textbox', 'button', 'radio', 'list', 'combo', 'toggle', 'spinner', 'scroll', 'label', 'image', '|', 'tools']} />
              <BarCap />
            </Toolbar>
          </BarRow>
          <BarRow>
            <Toolbar>
              <Grip />
              <Tools items={['page', 'open', 'save', 'perm', 'mail', '|', 'print', 'lens', '|', 'paste', '|', 'undo', 'v', 'redo', 'v']} />
              <Spacer $width={6} />
              <BarCap />
            </Toolbar>
            <Toolbar $grow>
              <Grip />
              <Tools items={['styles']} />
              <Drop width={71} label="Style" options={['Normal']} />
              <Drop width={86} label="Font" options={['Times New Roman']} />
              <Drop width={28} label="Font size" options={['12']} />
              <Spacer $width={1} />
              <Tools
                active="left"
                items={['|', 'bold', 'italic', 'underline', '|', 'left', 'center', 'right', 'justify', 'dist', 'spacing', 'v', '|', 'numbers', 'bullets', 'outdent', 'indent', '|', 'border', 'v', 'highlight', 'v', 'fontColor', 'v']}
              />
              <Spacer />
              <BarCap />
            </Toolbar>
          </BarRow>
        </Bars>

        <Workspace>
          <Corner aria-label="Tab type"><Icon name="tab" size={6} /></Corner>
          <TopRuler>
            <TopScale>
              <Marks from={-10} to={58} />
              <IndentMarker $at={94} viewBox="0 0 9 18">
                <path d="M1 1h7v3L5 8l3 3v6H1v-6l3-3-3-4zM1 13h7" fill="#fff" stroke="#333" strokeWidth="1.200" />
              </IndentMarker>
              <IndentMarker $at={544} viewBox="0 0 9 18">
                <path d="M1 14v-3l3.500-3.500L8 11v3z" fill="#fff" stroke="#333" strokeWidth="1.200" />
              </IndentMarker>
            </TopScale>
          </TopRuler>
          <ScrollColumn>
            <ScrollButton aria-label="Scroll up"><Chevron d={CHEVRONS.up} /></ScrollButton>
            <ScrollThumb />
            <Spacer />
            <ScrollButton aria-label="Scroll down"><Chevron d={CHEVRONS.down} /></ScrollButton>
            <ScrollButton $flat aria-label="Previous page"><Icon name="dotUp" /></ScrollButton>
            <ScrollButton $flat aria-label="Browse object"><Icon name="browse" /></ScrollButton>
            <ScrollButton $flat aria-label="Next page"><Icon name="dotDown" /></ScrollButton>
          </ScrollColumn>
          <SideRuler>
            <SideScale><Marks from={-8} to={38} side /></SideScale>
          </SideRuler>
          <Desk>
            <Page><CropMark /><CropMark $right /></Page>
          </Desk>
        </Workspace>

        <ScrollRow>
          {['normalView', 'webView', 'printView', 'outlineView', 'readView'].map((v) => (
            <ViewButton key={v} $on={v === 'printView'} aria-label={v}><Icon name={v} /></ViewButton>
          ))}
          <ScrollButton aria-label="Scroll left"><Chevron d={CHEVRONS.left} /></ScrollButton>
          <ScrollTrack>
            <svg viewBox="0 0 346 12">
              <path d="M3 4v5M6 4v5" stroke="#aab4e8" />
              <path d="M5-1h8M13-2h6M25-2h6" stroke="#4fe4f8" />
              <path d="M218 0h27v3h-27zM245 3h26v4h-26z" fill="#19d2fa" />
            </svg>
          </ScrollTrack>
          <ScrollButton aria-label="Scroll right"><Chevron d={CHEVRONS.right} /></ScrollButton>
        </ScrollRow>

        <DrawBars>
          <Toolbar>
            <Grip />
            <WordButton><span>D<u>r</u>aw</span><Down /></WordButton>
            <Tools items={['cursor', '|']} />
            <WordButton><span>A<u>u</u>toShapes</span><Down /></WordButton>
            <Tools items={['line', 'arrow', 'rect', 'oval', 'text', 'vtext', 'wordart', 'diagram', 'clip', 'image', '|', 'fill', 'v', 'brush', 'v', 'fontColor', 'v', 'weights', 'dashes', 'arrows', 'shadow', 'cube']} />
            <BarCap />
          </Toolbar>
        </DrawBars>

        <StatusBar>
          <Spacer $width={7} />
          {STATUS.map(([t, w, box, dim]) => <StatusCell key={t} $width={w} $box={box} $dim={dim}>{t}</StatusCell>)}
          <StatusCell $width={44} $box><Spacer $width={9} /><Icon name="book" /></StatusCell>
          <StatusCell $width={34} $box />
          <StatusCell $width={32} $box />
          <StatusCell $width={24} $box />
        </StatusBar>

        <EnvelopesDialog />
        <OptionsDialog />
      </Window>
    </>
  );
}
